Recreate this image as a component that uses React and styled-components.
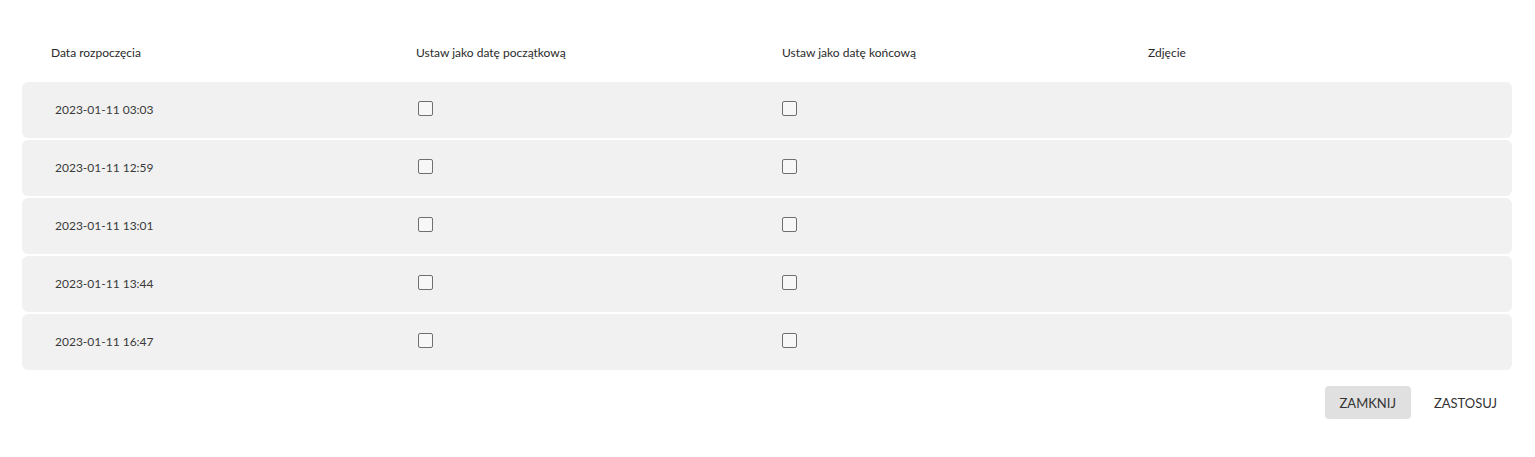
import styled, {createGlobalStyle} from 'styled-components';

const GlobalStyle = createGlobalStyle`
    html, body {
        margin: 0;
        padding: 0;
        background: #ffffff;
    }

    body {
        font-family: Lato, "Liberation Sans", sans-serif;
        color: #333333;
    }
`;

const StyledDialog = styled.div`
    box-sizing: border-box;
    width: 1535px;
    height: 457px;
    padding: 22px 23px 0 22px;
    background: #ffffff;
`;

const StyledHeader = styled.div`
    display: grid;
    grid-template-columns: 365px 366px 366px 1fr;
    align-items: center;
    height: 60px;
    padding-left: 29px;
    font-size: 12px;
    color: #2a2a2a;
`;

const StyledRows = styled.div`
    display: flex;
    flex-direction: column;
    gap: 2px;
`;

const StyledRow = styled.div`
    display: grid;
    grid-template-columns: 365px 366px 366px 1fr;
    align-items: center;
    height: 56px;
    padding-left: 29px;
    background: #f1f1f1;
    border-radius: 6px;
    font-size: 12px;
    color: #3a3a3a;
`;

const StyledDate = styled.span`
    padding-left: 4px;
    margin-bottom: 1px;
`;

const StyledCheckbox = styled.span`
    display: block;
    box-sizing: border-box;
    width: 15px;
    height: 15px;
    margin-left: ${({$offset}) => $offset}px;
    margin-bottom: 4px;
    border: 1.5px solid #6f6f6f;
    border-radius: 2px;
    background: #f7f7f7;
`;

const StyledActions = styled.div`
    display: flex;
    justify-content: flex-end;
    gap: 8px;
    margin-top: 16px;
`;

const StyledButton = styled.button`
    height: 33px;
    padding: 0 15px;
    border: none;
    border-radius: 4px;
    background: ${({$filled}) => ($filled ? '#e0e0e0' : 'transparent')};
    font-family: Lato, "Liberation Sans", sans-serif;
    font-size: 13px;
    color: #333333;
    text-transform: uppercase;
    cursor: pointer;
`;

const dates = [
    '2023-01-11 03:03',
    '2023-01-11 12:59',
    '2023-01-11 13:01',
    '2023-01-11 13:44',
    '2023-01-11 16:47',
];

const App = () => {
    return (<>
        <GlobalStyle/>
        <StyledDialog>
            <StyledHeader>
                <span>Data rozpoczęcia</span>
                <span>Ustaw jako datę początkową</span>
                <span>Ustaw jako datę końcową</span>
                <span>Zdjęcie</span>
            </StyledHeader>
            <StyledRows>
                {dates.map((date) => (<StyledRow key={date}>
                    <StyledDate>{date}</StyledDate>
                    <StyledCheckbox $offset={2}/>
                    <StyledCheckbox $offset={0}/>
                    <span/>
                </StyledRow>))}
            </StyledRows>
            <StyledActions>
                <StyledButton $filled>Zamknij</StyledButton>
                <StyledButton>Zastosuj</StyledButton>
            </StyledActions>
        </StyledDialog>
    </>);
};

export default App;
